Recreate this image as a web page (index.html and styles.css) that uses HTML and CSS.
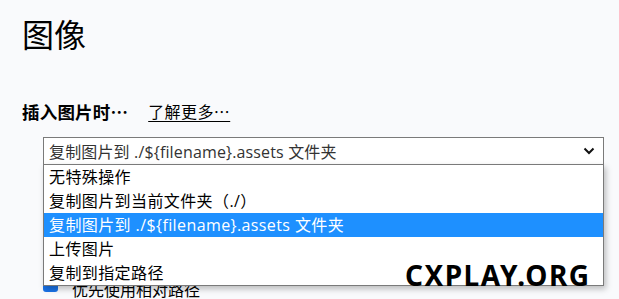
FILE: index.html
```html
<!DOCTYPE html>
<html lang="zh-CN">
<head>
<meta charset="utf-8">
<link rel="stylesheet" href="styles.css">
</head>
<body>
<div class="page">
  <h1 class="title">图像</h1>
  <div class="label-row">
    <span class="label">插入图片时…</span>
    <a class="more" href="#">了解更多…</a>
  </div>
  <div class="field">
    <div class="select">
      <span class="select-text">复制图片到 ./${filename}.assets 文件夹</span>
      <svg class="chev" width="12" height="8" viewBox="0 0 12 8"><path d="M1.5 1.5 L6 6 L10.5 1.5" fill="none" stroke="#111" stroke-width="2"/></svg>
    </div>
    <ul class="menu">
      <li class="opt">无特殊操作</li>
      <li class="opt">复制图片到当前文件夹（./）</li>
      <li class="opt sel">复制图片到 ./${filename}.assets 文件夹</li>
      <li class="opt">上传图片</li>
      <li class="opt">复制到指定路径</li>
    </ul>
    <div class="check-row">
      <span class="box"></span>
      <span class="check-text">优先使用相对路径</span>
    </div>
  </div>
  <div class="watermark">CXPLAY.ORG</div>
</div>
</body>
</html>
```
FILE: styles.css
```css
html, body {
  margin: 0;
  padding: 0;
  background: #f9fafc;
  height: 100%;
  overflow: hidden;
}
.page {
  position: relative;
  padding: 11px 0 0 22px;
  font-family: "Open Sans", "Noto Sans CJK SC", sans-serif;
  color: #000;
}
.title {
  margin: 0;
  font-family: "Noto Sans CJK SC", sans-serif;
  font-weight: 400;
  font-size: 32px;
  line-height: 44px;
}
.label-row {
  margin-top: 45px;
  display: flex;
  align-items: center;
  height: 22px;
  font-family: "Noto Sans CJK SC", sans-serif;
}
.label {
  font-weight: 700;
  font-size: 17.5px;
  letter-spacing: 0.2px;
}
.more {
  margin-left: 20px;
  font-size: 16px;
  letter-spacing: 0.4px;
  color: #000;
  text-decoration: underline;
  text-underline-offset: 3px;
}
.field {
  position: relative;
  margin: 15px 0 0 21px;
  width: 561px;
}
.select {
  box-sizing: border-box;
  height: 28px;
  border: 1px solid #7a7a7a;
  background: #fff;
  display: flex;
  align-items: center;
  justify-content: space-between;
  padding: 0 8px 0 5px;
  color: #333;
}
.select-text {
  font-size: 16px;
  letter-spacing: 0.15px;
}
.chev {
  display: block;
}
.menu {
  position: absolute;
  top: 27px;
  left: 0;
  box-sizing: border-box;
  width: 561px;
  margin: 0;
  padding: 0;
  list-style: none;
  background: #fff;
  border: 1px solid #7a7a7a;
  box-shadow: 2px 3px 6px rgba(0, 0, 0, 0.25);
  z-index: 2;
}
.opt {
  height: 24px;
  line-height: 24px;
  padding-left: 5px;
  font-size: 16px;
  letter-spacing: 0.4px;
  color: #000;
  white-space: nowrap;
}
.opt.sel {
  background: #1e90ff;
  color: #fff;
}
.check-row {
  display: flex;
  align-items: flex-start;
  gap: 14px;
  margin-top: 112px;
  height: 24px;
  font-family: "Noto Sans CJK SC", sans-serif;
  font-size: 16px;
  line-height: 24px;
}
.box {
  width: 15px;
  height: 15px;
  border-radius: 3px;
  background: #1a73e8;
}
.watermark {
  position: absolute;
  left: 405px;
  top: 256px;
  z-index: 3;
  font-family: "Noto Sans", "Open Sans", sans-serif;
  font-weight: 700;
  font-size: 28px;
  line-height: 38px;
  color: #000;
  letter-spacing: 1.5px;
}
```
